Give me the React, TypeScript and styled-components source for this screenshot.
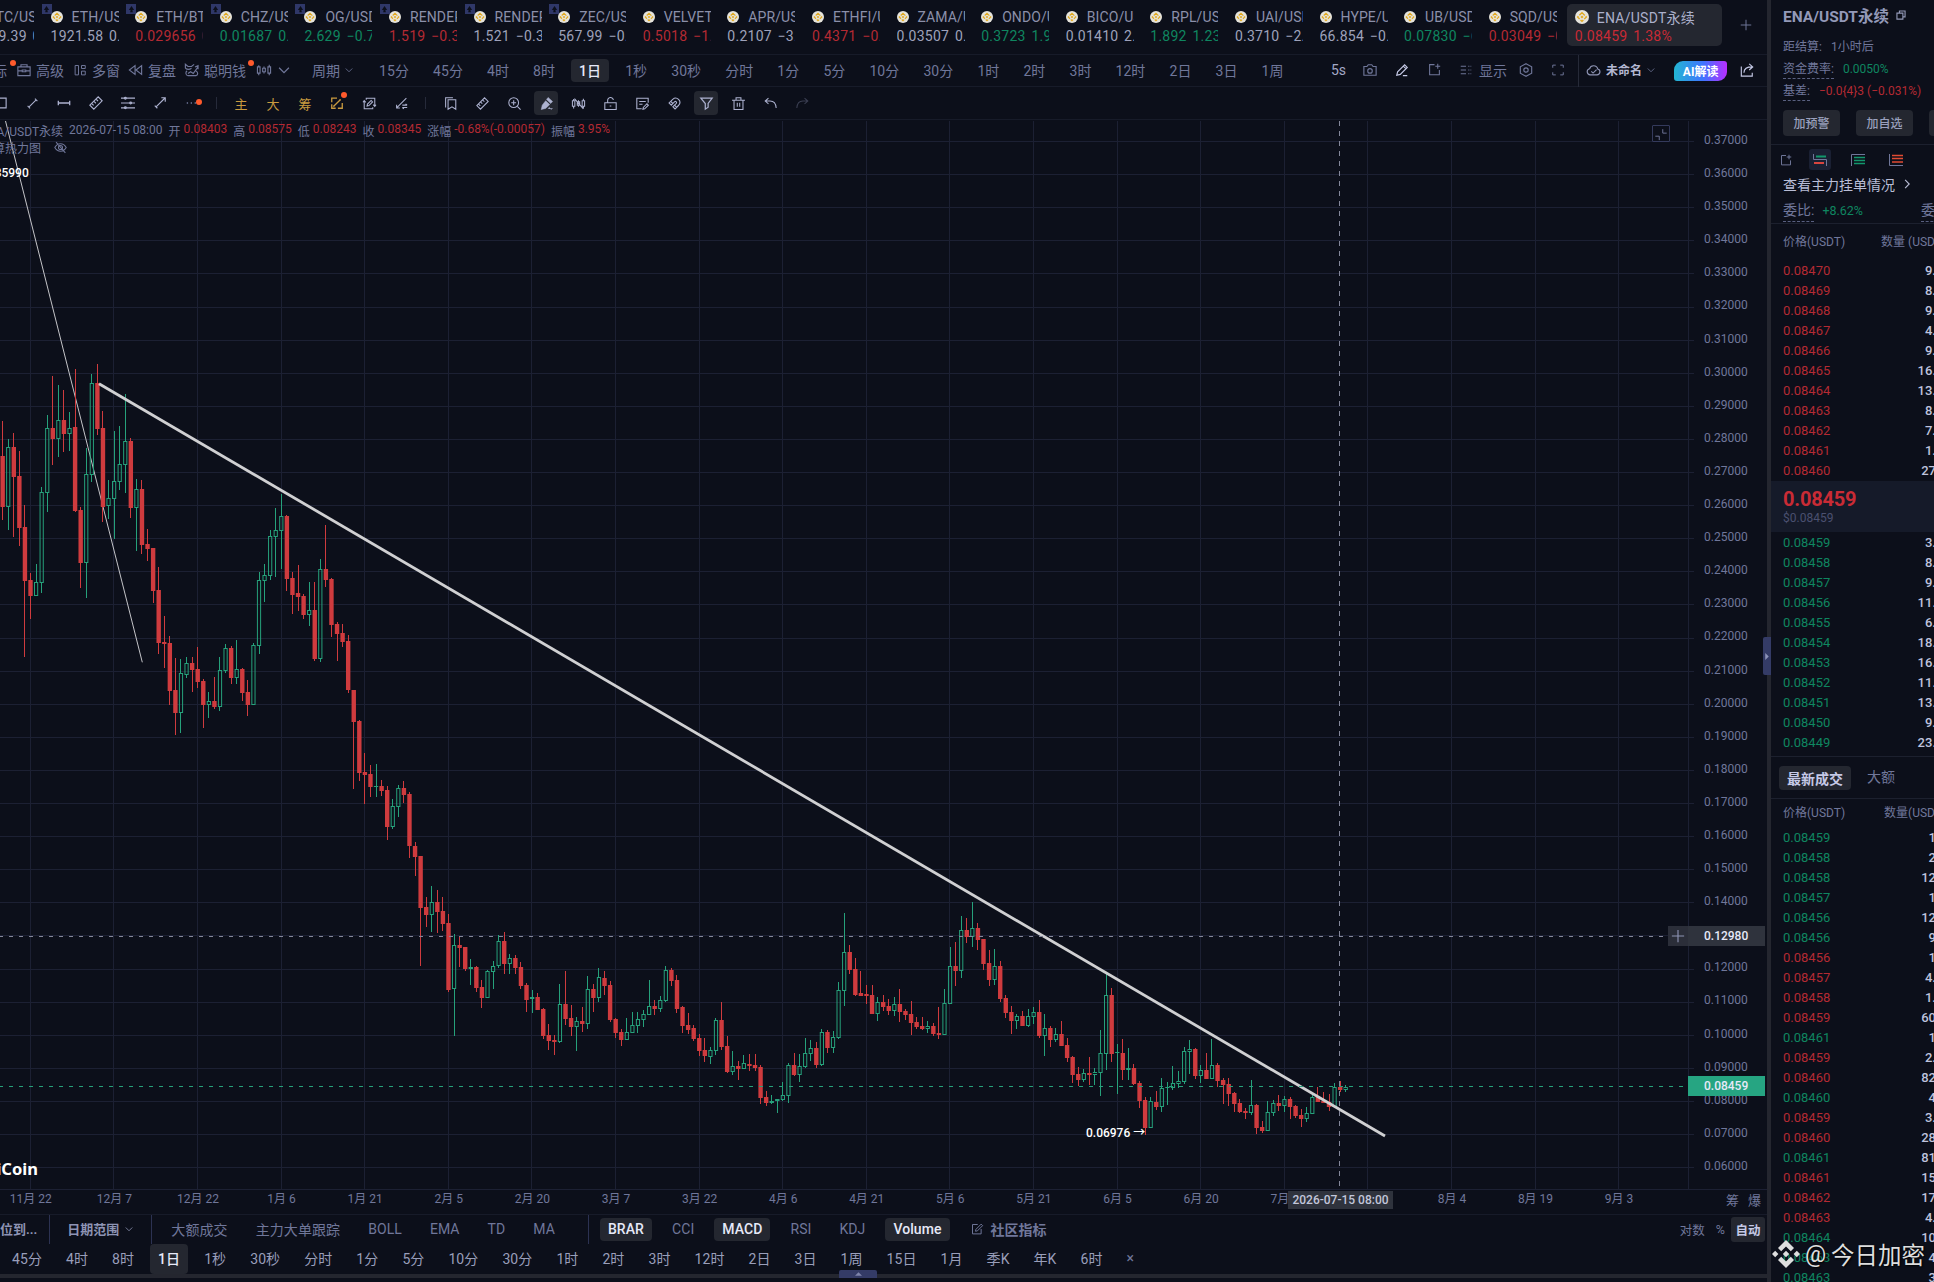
import React from "react";
import styled, { createGlobalStyle, css } from "styled-components";

const c = {
  bg: "#0c0f1a",
  grid: "#1c2033",
  line: "#171b29",
  divider: "#24262f",
  chip: "#242730",
  muted: "#70779a",
  soft: "#8e94b4",
  bright: "#c5c9e6",
  white: "#e6e9f8",
  green: "#0f8660",
  red: "#b42a33",
  up: "#26a17b",
  down: "#cf3b3e",
  gold: "#c99a3f",
  dot: "#ff5a2c",
};

const Global = createGlobalStyle`
  *, *::before, *::after { box-sizing: border-box; }
  html, body { margin: 0; padding: 0; background: ${c.bg}; }
  body {
    width: 1934px; height: 1282px; overflow: hidden;
    font-family: Roboto, "Noto Sans CJK SC", sans-serif;
    font-size: 14px; color: ${c.muted};
  }
`;

/* ---------- layout ---------- */
const Screen = styled.div`
  position: relative;
  display: grid;
  grid-template-columns: 1767px 4px 1fr;
  width: 1934px;
  height: 1282px;
  overflow: hidden;
  background: ${c.bg};
`;
const Main = styled.main`
  display: flex;
  flex-direction: column;
  min-width: 0;
  overflow: hidden;
`;
const Splitter = styled.div`
  position: relative;
  background: ${c.divider};
`;
const SplitHandle = styled.div`
  position: absolute;
  right: 0;
  top: 637px;
  width: 8px;
  height: 38px;
  display: flex;
  align-items: center;
  justify-content: center;
  background: #343b66;
  border-radius: 2px 0 0 2px;
`;

/* ---------- icons ---------- */
const Glyph = styled.svg<{ $w: number; $h: number; $color?: string }>`
  display: block;
  flex: none;
  width: ${(p) => p.$w}px;
  height: ${(p) => p.$h}px;
  color: ${(p) => p.$color ?? "currentColor"};
  fill: none;
  stroke: currentColor;
  stroke-width: 1.3;
  overflow: visible;
`;

const shapes: Record<string, React.ReactNode> = {
  briefcase: <path d="M1 4.500h14v10H1zM4.500 4.500V2h7v2.500M1 9h5M10 9h5M6 8h4v2H6z" />,
  windows: <path d="M1.500 2h4.500v12.500H1.500zM10 2h5v4h-5zM10 9.500h5v5h-5z" />,
  rewind: <path d="M7.500 3v10L1 8zM15 3v10L8.500 8z" />,
  cat: (
    <path d="M1 6V1.500L4 4h4l3-2.500M1 6c2 1.500 5 1.500 7 0M3 9c-2 1-2 5 1 5.500h9c3-1 2.500-4 0-5.500M4 12l3-2 3 2 5-7M12 4.500l3.500-1.500v4" />
  ),
  candles: (
    <path d="M.5 4.500h3v7h-3zM2 2.500v2M2 11.500v2.500M6.500 6h3v4h-3zM8 4v2M8 10v2M12.500 4.500h3v7h-3zM14 2v2.500M14 11.500V14" />
  ),
  candlesOff: (
    <path d="M.5 4.500h3v7h-3zM2 2.500v2M2 11.500v2.500M6.500 6h3v4h-3zM8 4v2M8 10v2M12.500 4.500h3v7h-3zM14 2v2.500M14 11.500V14M3 2l11 12.500" />
  ),
  chevron: <path d="M1.500 5L8 11.500 14.500 5" strokeWidth="1.600" />,
  camera: (
    <>
      <path d="M1 4h3.500L6 2h4l1.500 2H15v10H1z" />
      <circle cx="8" cy="9" r="2.600" />
    </>
  ),
  pencil: <path d="M2 14l1-4 8-8 3 3-8 8zM9.500 3.500l3 3M9 14.500h5" />,
  addBox: <path d="M8 2H2v12.500h12V8.500M12 1v6M9 4h6" />,
  list: <path d="M1 3h7M1 8h7M1 13h7M11 3h1.500M14 3h1M11 8h1.500M14 8h1M11 13h1.500M14 13h1" />,
  hexagon: (
    <>
      <path d="M8 .8l6.500 3.600v7.200L8 15.200 1.500 11.600V4.400z" />
      <circle cx="8" cy="8" r="2.500" />
    </>
  ),
  expand: <path d="M1 5V1.500h4M11 1.500h4V5M15 11v3.500h-4M5 14.500H1V11" />,
  cloud: <path d="M4.500 13.500A3.500 3.500 0 0 1 3.500 6.600 4.800 4.800 0 0 1 12.800 6.800 3.400 3.400 0 0 1 12 13.500zM5.500 9.500l2 2 4-4" />,
  share: <path d="M1.500 4v11H14v-4M4.500 11c0-4.500 3-6.500 9.500-6.500M10.500 1L14.500 4.500 10.500 8" />,
  rect: <path d="M1 2.500h14v11H1z" />,
  segment: <path d="M3.500 12.500l9-9M2 11l3 3M11 2l3 3" />,
  hseg: <path d="M1 8h14M1.500 5.500v5M14.500 5.500v5" strokeWidth="1.500" />,
  ruler: <path d="M1 10.500L10.500 1 15 5.500 5.500 15zM6 6.500l1.800 1.800M8.500 4l1.800 1.800M3.500 9l1.800 1.800" />,
  channel: (
    <>
      <path d="M0 2.500h16M0 8h16M0 13.500h16" />
      <circle cx="5" cy="2.500" r="1" />
      <circle cx="11" cy="8" r="1" />
      <circle cx="5" cy="13.500" r="1" />
    </>
  ),
  arrow: <path d="M3.500 12.500L14 2M9.500 2H14v4.500M2 11l3 3" />,
  dots: <path d="M2 8h1.500M6.500 8H8M11 8h1.500" strokeWidth="1.600" />,
  percent: <path d="M8 2.500H2V7M2 9.500v4.500h4.500M9 14h5V8M4.500 11.500l7-7M3.500 11.500h2M10.500 4.500h2" strokeWidth="1.500" />,
  swap: <path d="M4 3.500V1.500h10.500v9.500M12.500 9.500l2 2 1.500-2M1.500 5v9.500H12v-2M0 6.500L1.500 4.500 3.500 6.500M5 11l.5-2.300 4.500-4.500 1.800 1.800L7.300 10.500z" />,
  slant: <path d="M2 13.500L14 1.500M2 9.500v4h4M9 10h6M13 8.500L15 10M15 13H9M11 14.500L9 13" />,
  bookmark: <path d="M5 3.500h9.500v11.500l-4.700-3-4.800 3zM2 13V1h9" />,
  zoom: (
    <>
      <circle cx="7" cy="7" r="6" />
      <path d="M11.500 11.500L15.500 15.500M4 7h6M7 4v6" />
    </>
  ),
  brush: (
    <path
      d="M10 .5l5.500 5-2.300 2.500L8 3zM7 4.500l5 4.800L7 14l-5.500 1.500 1.200-5.500zM10 14.500c1-2 2-2 2.700-.3s1.500 1 2.800-.5"
      fill="currentColor"
      strokeWidth=".6"
    />
  ),
  unlock: <path d="M1 7h14v8.500H1zM4.500 7V4.500a3.500 3.500 0 0 1 7-.8M7 11h2" />,
  note: <path d="M15 7V1.500H1v13h6M4 5.500h8M4 9h4M8.500 15l.5-2.200L13.500 8.300l1.700 1.700-4.500 4.500z" />,
  magnet: (
    <g transform="scale(.667)" strokeWidth="2">
      <path d="M6 15l-4-4 6.750-6.770a7.790 7.790 0 0 1 11 11L13 22l-4-4 6.390-6.360a2.140 2.140 0 0 0-3-3zM5 8l4 4M12 15l4 4" />
    </g>
  ),
  funnel: <path d="M1 1.500h14L10 8v4.500L6.500 15V8z" strokeWidth="1.500" />,
  trash: <path d="M0 4h16M5 4V1h6V4M2.500 4v11.500h11V4M6.500 7v5M9.500 7v5" />,
  undo: <path d="M5.500 1.500L1.500 5l4 3.500M1.500 5h6c4 0 7 2.500 7.500 8.500" />,
  redo: <path d="M10.500 1.500L14.500 5l-4 3.500M14.500 5h-6C4.500 5 1.500 7.500 1 13.500" />,
  copy: <path d="M1.500 5h9.500v9.500H1.500zM5.500 5V1.500h9V11H11" strokeWidth="1.800" />,
  edit: <path d="M9 2H2v12.500h11.500V8M6 11l.5-2.500 7-7 2 2-7 7z" />,
  eyeOff: (
    <>
      <path d="M1 8c3.500-6 10.500-6 14 0-3.500 6-10.500 6-14 0zM2.500 1.500l11.500 13" />
      <circle cx="8" cy="8" r="2.500" />
    </>
  ),
  plus: <path d="M8 1v14M1 8h14" />,
  right: <path d="M5 1.500L11.500 8 5 14.500" strokeWidth="1.800" />,
};

function Icon({ name, w = 14, h = w, color }: { name: string; w?: number; h?: number; color?: string }) {
  return (
    <Glyph viewBox="0 0 16 16" $w={w} $h={h} $color={color}>
      {shapes[name]}
    </Glyph>
  );
}

/* ---------- symbol tabs ---------- */
const TabStrip = styled.nav`
  flex: none;
  display: flex;
  height: 55px;
  padding-top: 4px;
  border-bottom: 1px solid ${c.line};
`;
const Tab = styled.div<{ $first?: boolean }>`
  position: relative;
  flex: none;
  width: 84.600px;
  padding-top: 3px;
  margin-left: ${(p) => (p.$first ? "-34px" : "0")};
`;
const TabClip = styled.div`
  width: 68px;
  overflow: hidden;
  white-space: nowrap;
`;
const TabName = styled.div<{ $gap?: number }>`
  display: flex;
  align-items: center;
  gap: ${(p) => p.$gap ?? 9}px;
  height: 20px;
  font-size: 14px;
  color: #8b90aa;
  letter-spacing: 0.1px;
`;
const tones = { g: c.green, r: c.red, w: "#9ea2ba" };
const TabQuote = styled.div<{ $tone: "g" | "r" | "w" }>`
  height: 19px;
  line-height: 19px;
  font-size: 14px;
  letter-spacing: 0.25px;
  word-spacing: 2px;
  white-space: pre;
  color: ${(p) => tones[p.$tone]};
`;
const TabBadge = styled.div`
  position: absolute;
  left: -9px;
  top: 0;
  width: 10px;
  height: 10px;
  display: grid;
  place-items: center;
  background: #2f3768;
`;
const ActiveTab = styled.div`
  flex: none;
  width: 155px;
  height: 42px;
  margin-left: -6.500px;
  padding: 3px 8px 0;
  border-radius: 5px;
  background: ${c.chip};
  ${TabName} { color: #abb0cb; letter-spacing: 0.25px; }
  ${TabQuote} { color: #c92a35; }
`;
const AddTab = styled.div`
  display: flex;
  align-items: center;
  margin-left: 18px;
  height: 42px;
`;

function Coin({ size = 12 }: { size?: number }) {
  return (
    <Glyph viewBox="0 0 16 16" $w={size} $h={size} style={{ stroke: "none" }}>
      <circle cx="8" cy="8" r="8" fill="#e6e4dc" />
      <path d="M8 3l5 5-5 5-5-5z" fill="none" stroke="#e2a91f" strokeWidth="1.600" strokeDasharray="4.500 1.500" />
      <path d="M8 6.200L9.800 8 8 9.800 6.200 8z" fill="#e2a91f" />
    </Glyph>
  );
}

type TabRow = [string, string, "g" | "r" | "w", boolean?];
const tabs: TabRow[] = [
  ["BTC/USDT", "64779.39 0.15%", "w"],
  ["ETH/USDT", "1921.58 0.12%", "w", true],
  ["ETH/BTC", "0.029656 0.2%", "r", true],
  ["CHZ/USDT", "0.01687 0.4%", "g", true],
  ["OG/USDT", "2.629 -0.7%", "g", true],
  ["RENDER/USDT", "1.519 -0.3%", "r", true],
  ["RENDER/USDT", "1.521 -0.3%", "w", true],
  ["ZEC/USDT", "567.99 -0.8%", "w", true],
  ["VELVET/USDT", "0.5018 -1.2%", "r"],
  ["APR/USDT", "0.2107 -3.1%", "w"],
  ["ETHFI/USDT", "0.4371 -0.9%", "r"],
  ["ZAMA/USDT", "0.03507 0.4%", "w"],
  ["ONDO/USDT", "0.3723 1.95%", "g"],
  ["BICO/USDT", "0.01410 2.1%", "w"],
  ["RPL/USDT", "1.892 1.23%", "g"],
  ["UAI/USDT", "0.3710 -2.4%", "w"],
  ["HYPE/USDT", "66.854 -0.6%", "w"],
  ["UB/USDT", "0.07830 -6.1%", "g"],
  ["SQD/USDT", "0.03049 -0.8%", "r"],
];

function SymbolTabs() {
  return (
    <TabStrip>
      {tabs.map(([name, quote, tone, badge], i) => (
        <Tab key={i} $first={i === 0}>
          {badge && (
            <TabBadge>
              <Glyph viewBox="0 0 8 8" $w={7} $h={7}>
                <path d="M4 0l3 4.500H5L5.500 7h-3L3 4.500H1z" fill="#0c0f1a" stroke="none" />
              </Glyph>
            </TabBadge>
          )}
          <TabClip>
            <TabName>
              <Coin />
              {name}
            </TabName>
            <TabQuote $tone={tone}>{quote.replace("-", "−")}</TabQuote>
          </TabClip>
        </Tab>
      ))}
      <ActiveTab>
        <TabName $gap={8}>
          <Coin size={14} />
          ENA/USDT永续
        </TabName>
        <TabQuote $tone="r">0.08459 1.38%</TabQuote>
      </ActiveTab>
      <AddTab>
        <Icon name="plus" w={12} />
      </AddTab>
    </TabStrip>
  );
}

/* ---------- toolbars ---------- */
const Bar = styled.div<{ $h: number }>`
  flex: none;
  display: flex;
  align-items: center;
  height: ${(p) => p.$h}px;
  border-bottom: 1px solid ${c.line};
  white-space: nowrap;
`;
const ToolItem = styled.div<{ $before?: number; $gap?: number; $color?: string; $size?: number; $bold?: boolean }>`
  position: relative;
  flex: none;
  display: flex;
  align-items: center;
  gap: ${(p) => p.$gap ?? 5}px;
  margin-left: ${(p) => p.$before ?? 0}px;
  padding-bottom: 2px;
  color: ${(p) => p.$color ?? c.muted};
  font-size: ${(p) => p.$size ?? 14}px;
  font-weight: ${(p) => (p.$bold ? 700 : 400)};
`;
const RedDot = styled.i<{ $right: number; $top: number }>`
  position: absolute;
  right: ${(p) => p.$right}px;
  top: ${(p) => p.$top}px;
  width: 6px;
  height: 6px;
  border-radius: 50%;
  background: ${c.dot};
`;
const PeriodList = styled.div<{ $before: number }>`
  display: flex;
  gap: 8px;
  margin-left: ${(p) => p.$before}px;
`;
const Period = styled.span<{ $on?: boolean; $tall?: boolean; $color?: string }>`
  display: flex;
  align-items: center;
  height: ${(p) => (p.$tall ? 30 : 23)}px;
  padding: 0 8px ${(p) => (p.$tall ? 3 : 2)}px;
  border-radius: 4px;
  letter-spacing: 0.08px;
  color: ${(p) => p.$color ?? c.muted};
  ${(p) => p.$on && css`
    background: ${c.chip};
    color: ${c.white};
    font-weight: 500;
  `}
`;
const RightTools = styled.div`
  display: flex;
  align-items: center;
  width: 436px;
  height: 100%;
  margin-left: auto;
`;
const VRule = styled.i<{ $h: string; $before: number; $color?: string }>`
  flex: none;
  width: 1px;
  height: ${(p) => p.$h};
  margin-left: ${(p) => p.$before}px;
  background: ${(p) => p.$color ?? "#262a38"};
`;
const AiButton = styled.div`
  display: grid;
  place-items: center;
  width: 53px;
  height: 20px;
  margin-left: 19px;
  border-radius: 9px 3px 9px 3px;
  background: linear-gradient(90deg, #23b6d3, #3f74ff 55%, #b82eff);
  color: #fff;
  font-size: 12px;
  font-weight: 700;
`;

const periods = ["15分", "45分", "4时", "8时", "1日", "1秒", "30秒", "分时", "1分", "5分", "10分", "30分", "1时", "2时", "3时", "12时"];

function MainToolbar() {
  return (
    <Bar $h={32}>
      <ToolItem $before={-7}>
        标
        <RedDot $right={-9} $top={0} />
      </ToolItem>
      <ToolItem $before={10}><Icon name="briefcase" />高级</ToolItem>
      <ToolItem $before={10} $gap={6}><Icon name="windows" w={12} h={14} />多窗</ToolItem>
      <ToolItem $before={8}><Icon name="rewind" w={15} h={14} />复盘</ToolItem>
      <ToolItem $before={8}>
        <Icon name="cat" w={15} h={14} />聪明钱
        <RedDot $right={-8} $top={0} />
      </ToolItem>
      <ToolItem $before={11}><Icon name="candles" /></ToolItem>
      <ToolItem $before={7}><Icon name="chevron" w={12} h={12} /></ToolItem>
      <ToolItem $before={22}>周期<Icon name="chevron" w={8} /></ToolItem>
      <PeriodList $before={18}>
        {[...periods, "2日", "3日", "1周"].map((p) => (
          <Period key={p} $on={p === "1日"}>{p}</Period>
        ))}
      </PeriodList>
      <RightTools>
        <ToolItem $color="#a3a8c6">5s</ToolItem>
        <ToolItem $before={16}><Icon name="camera" w={16} h={14} /></ToolItem>
        <ToolItem $before={17} $color={c.bright}><Icon name="pencil" /></ToolItem>
        <ToolItem $before={19}><Icon name="addBox" w={13} /></ToolItem>
        <ToolItem $before={19} $gap={7}><Icon name="list" w={12} />显示</ToolItem>
        <ToolItem $before={12}><Icon name="hexagon" w={14} /></ToolItem>
        <ToolItem $before={19}><Icon name="expand" w={12} /></ToolItem>
        <VRule $h="32px" $before={14} />
        <ToolItem $before={7} $color={c.soft}><Icon name="cloud" w={15} h={14} /></ToolItem>
        <ToolItem $before={5} $size={12} $color="#b4b8d2" $bold>未命名<Icon name="chevron" w={8} color={c.muted} /></ToolItem>
        <AiButton>AI解读</AiButton>
        <ToolItem $before={13} $color={c.bright}><Icon name="share" /></ToolItem>
      </RightTools>
    </Bar>
  );
}

const DrawBar = styled(Bar)`
  gap: 8px;
  color: #adb2d0;
`;
const DrawCell = styled.div<{ $first?: boolean; $on?: boolean; $gold?: boolean; $dim?: boolean }>`
  position: relative;
  flex: none;
  display: grid;
  place-items: center;
  width: 24px;
  height: 24px;
  margin-left: ${(p) => (p.$first ? "-12px" : "0")};
  border-radius: 4px;
  font-size: 13px;
  background: ${(p) => (p.$on ? c.chip : "transparent")};
  color: ${(p) => (p.$gold ? c.gold : p.$dim ? "#3b3f52" : "inherit")};
`;
const DrawSep = styled.i`
  flex: none;
  width: 1px;
  height: 12px;
  margin: 0 4px;
  background: #262a3a;
`;

function DrawToolbar() {
  return (
    <DrawBar $h={33}>
      <DrawCell $first><Icon name="rect" w={14} /></DrawCell>
      {["segment", "hseg", "ruler", "channel", "arrow"].map((n) => (
        <DrawCell key={n}><Icon name={n} w={n === "segment" ? 13 : 14} /></DrawCell>
      ))}
      <DrawCell>
        <Icon name="dots" w={14} color={c.muted} />
        <RedDot $right={2} $top={8} />
      </DrawCell>
      <DrawSep />
      <DrawCell $gold>主</DrawCell>
      <DrawCell $gold>大</DrawCell>
      <DrawCell $gold>筹</DrawCell>
      <DrawCell $gold>
        <Icon name="percent" w={14} />
        <RedDot $right={2} $top={1} />
      </DrawCell>
      <DrawCell><Icon name="swap" w={13} /></DrawCell>
      <DrawCell><Icon name="slant" w={13} /></DrawCell>
      <DrawSep />
      {["bookmark", "ruler", "zoom", "brush", "candlesOff", "unlock", "note", "magnet", "funnel", "trash", "undo", "redo"].map((n) => (
        <DrawCell key={n} $on={n === "brush" || n === "funnel"} $dim={n === "redo"}>
          <Icon name={n} w={13} />
        </DrawCell>
      ))}
    </DrawBar>
  );
}

/* ---------- chart ---------- */
const ChartArea = styled.section`
  position: relative;
  flex: none;
  display: flex;
  height: 1069px;
`;
const Plot = styled.svg`
  display: block;
  flex: none;
  width: 1694px;
  height: 1069px;
`;
const PriceAxis = styled.div`
  flex: none;
  width: 73px;
  padding: 4px 0 0 10px;
`;
const PriceLabel = styled.div`
  height: 33.1px;
  line-height: 33.1px;
  font-size: 12px;
  color: ${c.muted};
`;
const PriceTag = styled.div<{ $top: number; $bg: string }>`
  position: absolute;
  left: 1688px;
  top: ${(p) => p.$top}px;
  width: 77px;
  height: 20px;
  padding-left: 16px;
  line-height: 20px;
  font-size: 12px;
  font-weight: 500;
  color: ${c.white};
  background: ${(p) => p.$bg};
`;
const AddAlert = styled.div`
  position: absolute;
  left: 1668px;
  top: 806px;
  width: 20px;
  height: 20px;
  display: grid;
  place-items: center;
  background: #2b2e39;
  color: ${c.soft};
`;
const Legend = styled.div`
  position: absolute;
  left: 0;
  top: 1px;
  font-size: 12px;
  white-space: nowrap;
  color: ${c.muted};
`;
const LegendRow = styled.div<{ $shift: number; $h: number }>`
  display: flex;
  align-items: center;
  height: ${(p) => p.$h}px;
  margin-left: ${(p) => p.$shift}px;
`;
const Field = styled.span`
  display: flex;
  gap: 3px;
  margin-left: 6px;
`;
const FieldValue = styled.span`
  color: ${c.red};
`;
const EyeSlot = styled.span`
  margin-left: 13px;
`;
const Note = styled.div<{ $left: number; $top: number; $size?: number; $bold?: boolean }>`
  position: absolute;
  left: ${(p) => p.$left}px;
  top: ${(p) => p.$top}px;
  font-size: ${(p) => p.$size ?? 12}px;
  font-weight: ${(p) => (p.$bold ? 700 : 500)};
  line-height: 16px;
  color: #fff;
  white-space: nowrap;
`;
const Logo = styled(Note)`
  font-family: "Noto Sans", "Open Sans", sans-serif;
`;
const FoldButton = styled.div`
  position: absolute;
  left: 1652px;
  top: 5px;
  width: 18px;
  height: 17px;
  display: grid;
  place-items: center;
  border: 1px solid #343a5c;
  border-radius: 1px;
`;

/* Candles: direction, high, body top, body bottom, low; in thirds of a pixel below `base`. */
const sessions = [
  {
    base: 350,
    rows: `r 213 318 470 510;g 268 291 470 540;r 249 291 380 560;r 304 378 533 588;r 465 531 692 920;r 668 690 738 807;g 642 696 738 738;g 412 427 698 728;g 196 234 429 486;r 79 234 267 345;g 105 210 267 320;r 120 210 252 305;g 187 234 252 302;r 56 231 483 486;r 472 480 639 713;g 294 373 638 745;g 72 99 375 395;r 42 99 237 254;r 184 234 470 515;g 391 445 467 506;g 244 393 446 567;g 229 343 396 420;g 133 273 345 429;r 264 273 473 504;g 388 417 473 603;r 391 417 585 612;r 538 582 597 633;r 594 594 723 758;r 652 720 879 911;r 798 876 882 953;r 858 879 1023 1064;r 925 1020 1089 1154;g 927 969 1088 1148;g 921 939 975 984;r 921 939 960 1025;r 891 957 996 1014;r 988 993 1065 1133;g 1027 1053 1065 1103;r 982 1053 1071 1076;g 921 960 1071 1082;g 883 894 962 970;r 888 894 984 1001;g 871 957 984 1003;r 955 957 1029 1052;r 991 1026 1065 1097;g 880 885 1065 1065;g 667 690 888 911;g 642 675 693 755;g 541 559 678 689;g 474 540 560 682;g 432 498 543 656;r 496 498 687 722;r 667 684 735 792;r 646 729 741 782;r 732 738 795 806;g 697 780 795 827;r 697 780 927 932;g 626 657 927 935;r 525 657 690 711;r 685 687 825 861;r 816 822 852 932;r 822 849 876 891;r 855 873 1020 1030;r 1020 1020 1116 1316;r 1110 1113 1269 1293;r 1209 1266 1275 1362;r 1245 1272 1311 1341;g 1243 1307 1311 1341;r 1290 1308 1323 1337`,
  },
  {
    base: 750,
    rows: `r 108 120 231 269;g 148 168 231 236;g 106 114 171 202;r 94 114 135 158;r 127 132 288 323;r 276 288 321 377;r 318 318 474 647;r 441 471 495 531;g 409 456 495 545;r 420 456 486 549;r 441 483 522 543;r 492 519 720 727;g 552 585 717 857;r 558 585 594 650;r 591 591 657 663;g 628 651 657 704;r 649 651 714 725;r 690 711 744 773;g 659 663 744 744;g 633 648 666 716;g 556 573 648 653;r 546 573 642 671;g 612 624 642 671;r 615 624 654 673;r 636 651 708 716;r 699 705 750 785;g 720 741 747 789;r 730 741 780 780;r 774 777 858 866;r 823 855 873 900;r 856 870 876 914;g 702 762 876 879;r 663 762 807 825;r 765 804 831 858;g 801 813 831 903;r 772 813 822 847;g 678 717 822 837;r 702 717 744 785;g 654 681 744 757;r 663 684 708 735;r 693 705 810 815;r 805 807 850 865;r 837 846 870 888;g 804 846 870 870;g 786 825 849 849;g 786 807 828 848;g 780 792 810 830;g 690 768 795 795;r 750 768 777 794;g 738 750 777 785;g 649 660 753 757;r 654 660 693 708;r 675 690 777 789;r 767 771 828 849;r 789 825 840 852;r 825 834 867 873;r 852 864 903 917;r 865 900 918 936;g 892 900 921 943;g 804 810 903 915;r 756 810 891 901;r 858 888 966 968;g 904 948 966 975;r 934 948 957 990;g 915 939 957 957;r 912 942 948 962;r 912 945 954 963;r 946 951 1044 1063;r 1023 1041 1059 1068;g 1036 1053 1059 1061;g 1047 1047 1053 1089;g 996 1035 1050 1054;g 939 945 1038 1060;r 910 945 975 977;g 912 948 975 995;g 865 909 951 953;g 870 894 912 932;r 876 894 945 953;g 837 846 945 948;r 841 846 894 909;g 843 861 894 909;g 697 720 864 867;g 489 606 723 768;r 586 606 660 671;r 625 657 735 738;r 663 729 738 738;r 705 732 738 762;r 706 735 792 792;g 741 756 792 812`,
  },
  {
    base: 860,
    rows: `r 405 426 441 454;r 416 438 453 466;g 411 432 453 468;r 387 432 456 486;r 447 453 465 479;r 423 462 489 526;r 471 486 501 507;r 471 498 507 511;g 483 498 507 518;r 489 498 522 527;r 441 519 525 537;g 388 429 525 525;g 262 318 432 432;r 247 318 333 378;g 169 210 333 354;r 174 210 231 249;g 127 204 231 261;r 190 204 240 269;r 237 237 312 330;r 269 309 360 378;g 268 318 360 375;r 303 318 417 427;r 405 414 459 473;r 437 456 483 523;g 463 468 483 508;r 453 468 498 498;g 448 468 498 502;g 442 456 471 493;r 421 456 528 535;g 461 504 528 588;r 499 504 540 561;g 505 522 540 547;r 484 522 558 558;r 534 555 594 605;r 588 591 645 668;r 621 642 660 678;g 627 639 660 667;r 592 639 645 674;g 624 636 645 676;g 511 579 639 708;g 340 405 582 630;r 385 405 582 605;g 552 576 580 702;r 538 579 630 660;g 564 624 630 661;r 612 624 672 675;r 663 669 723 744;r 711 720 804 824;g 712 723 804 804;r 694 726 741 750;g 654 684 741 756;g 667 681 685 735;g 618 669 684 690;g 634 663 672 684;g 562 573 666 673;g 541 567 576 641;r 564 567 648 658;g 615 630 648 670;r 580 630 657 657;g 538 615 657 657;r 610 615 663 680;r 655 660 675 731;r 655 672 702 738;r 697 699 732 756;r 718 729 756 758;r 745 753 759 776;g 661 735 759 765;r 733 735 804 821;r 783 801 813 818;g 724 756 813 813;g 721 729 759 768;r 705 729 738 754;g 708 717 738 757;r 710 717 741 777;r 736 738 768 774;r 748 765 777 800;g 742 759 777 785;g 703 711 762 762;r 682 708 726 726;r 697 723 729 730;r 703 726 741 753;g 669 681 741 742;r 664 681 690 697;g 675 681 690 696`,
  },
];

const candles = sessions.flatMap(({ base, rows }) =>
  rows.split(";").map((row) => {
    const [dir, ...v] = row.split(" ");
    const [high, top, bottom, low] = v.map((n) => Math.round(base + Number(n) / 3));
    return { up: dir === "g", high, top, bottom, low };
  }),
);

const STEP = 5.573;
const FIRST = 2.65;

function Candle({ i, up, high, top, bottom, low }: { i: number; up: boolean; high: number; top: number; bottom: number; low: number }) {
  const x = FIRST + i * STEP;
  const wick = Math.floor(x);
  const h = Math.max(1, bottom - top);
  const color = up ? c.up : c.down;
  return (
    <g fill={color}>
      {top > high && <rect x={wick} y={high} width={1} height={top - high} />}
      {low > bottom && <rect x={wick} y={bottom} width={1} height={low - bottom} />}
      {up && h > 2 ? (
        <rect x={x - 1.6} y={top + 0.5} width={3.2} height={h - 1} fill="none" stroke={color} />
      ) : (
        <rect x={x - 2.2} y={top} width={4.4} height={h} />
      )}
    </g>
  );
}

function ChartPlot() {
  return (
    <Plot viewBox="0 120 1694 1069">
      <g fill={c.grid}>
        {Array.from({ length: 32 }, (_, k) => (
          <rect key={k} x={0} y={Math.round(141 + 33.1 * k)} width={1694} height={1} />
        ))}
        {Array.from({ length: 20 }, (_, k) => (
          <rect key={k} x={Math.round(29.85 + 83.6 * k)} y={121} width={1} height={1068} />
        ))}
        <rect x={1688} y={121} width={1} height={1068} />
      </g>
      <path d="M5.500 121L142.300 662.300" stroke="#c4c4c8" strokeWidth="1" />
      {candles.map((k, i) => (
        <Candle key={i} i={i} {...k} />
      ))}
      <path d="M99 383.700L1385 1136" stroke="#d0d0d2" strokeWidth="2.800" />
      <path d="M0 936.500H1668" stroke="#84879a" strokeDasharray="4 6" strokeDashoffset="1" />
      <path d="M0 1086.500H1688" stroke={c.up} strokeDasharray="4 6" strokeDashoffset="1" />
      <path d="M1688 1086.500h6" stroke="#fff" />
      <path d="M1339.500 121V1189" stroke="#84879a" strokeDasharray="5 5" />
    </Plot>
  );
}

const priceLabels = Array.from({ length: 32 }, (_, k) => (0.37 - k * 0.01).toFixed(5));

function Chart() {
  return (
    <ChartArea>
      <ChartPlot />
      <PriceAxis>
        {priceLabels.map((p) => (
          <PriceLabel key={p}>{p === "0.13000" ? "" : p}</PriceLabel>
        ))}
      </PriceAxis>
      <AddAlert><Icon name="plus" w={14} /></AddAlert>
      <PriceTag $top={806} $bg="#2f333d">0.12980</PriceTag>
      <PriceTag $top={956} $bg="#26a582">0.08459</PriceTag>
      <Legend>
        <LegendRow $shift={-19} $h={18}>
          ENA/USDT永续
          <Field>2026-07-15 08:00</Field>
          {[["开", "0.08403"], ["高", "0.08575"], ["低", "0.08243"], ["收", "0.08345"], ["涨幅", "-0.68%(-0.00057)"], ["振幅", "3.95%"]].map(([k, v]) => (
            <Field key={k}>{k}<FieldValue>{v}</FieldValue></Field>
          ))}
        </LegendRow>
        <LegendRow $shift={-19} $h={16}>
          清算热力图
          <EyeSlot><Icon name="eyeOff" w={13} /></EyeSlot>
        </LegendRow>
      </Legend>
      <Note $left={-15.5} $top={44.5}>0.35990</Note>
      <Note $left={1086} $top={1005}>0.06976 →</Note>
      <Logo $left={-15} $top={1041} $size={16.5} $bold>AiCoin</Logo>
      <FoldButton>
        <Glyph viewBox="0 0 16 16" $w={14} $h={14}>
          <path d="M10 2.500v4.500h4.500M1.500 10.500H6V15" strokeWidth="1.100" />
        </Glyph>
      </FoldButton>
    </ChartArea>
  );
}

const TimeAxis = styled.div`
  position: relative;
  flex: none;
  display: flex;
  height: 25px;
  border-top: 1px solid ${c.grid};
`;
const TimeLabel = styled.div<{ $first?: boolean }>`
  flex: none;
  width: 83.6px;
  margin-left: ${(p) => (p.$first ? "-11px" : "0")};
  text-align: center;
  font-size: 12px;
  line-height: 19px;
`;
const TimeTag = styled.div`
  position: absolute;
  left: 1288px;
  top: 1px;
  width: 105px;
  height: 18px;
  line-height: 18px;
  text-align: center;
  font-size: 12px;
  font-weight: 500;
  background: #2f333d;
  color: #c2c6da;
`;
const AxisModes = styled.div`
  position: absolute;
  right: 6px;
  top: 0;
  display: flex;
  gap: 9px;
  line-height: 22px;
  font-size: 13px;
`;
const dates = ["11月 22", "12月 7", "12月 22", "1月 6", "1月 21", "2月 5", "2月 20", "3月 7", "3月 22", "4月 6", "4月 21", "5月 6", "5月 21", "6月 5", "6月 20", "7月 5", "", "8月 4", "8月 19", "9月 3"];

/* ---------- bottom bars ---------- */
const BottomBar = styled.div<{ $rule?: boolean }>`
  flex: none;
  display: flex;
  align-items: center;
  height: 30px;
  white-space: nowrap;
  border-top: ${(p) => (p.$rule ? `1px solid ${c.line}` : "none")};
`;
const Indicators = styled.div<{ $before: number }>`
  display: flex;
  gap: 12px;
  margin-left: ${(p) => p.$before}px;
`;
const ScaleModes = styled.div`
  display: flex;
  align-items: center;
  gap: 11px;
  margin-left: auto;
  margin-right: 2px;
  font-size: 12.500px;
`;
const AutoScale = styled.span`
  display: grid;
  place-items: center;
  width: 34px;
  height: 25px;
  margin-left: -5px;
  border-radius: 3px;
  background: ${c.chip};
  color: ${c.bright};
  font-weight: 700;
`;
const FootRule = styled.div`
  position: relative;
  flex: none;
  height: 4px;
  background: ${c.divider};
`;
const FootHandle = styled.div`
  position: absolute;
  left: 839px;
  bottom: 0;
  width: 38px;
  height: 8px;
  display: grid;
  place-items: center;
  border-radius: 2px 2px 0 0;
  background: #343b66;
`;

function BottomBars() {
  return (
    <>
      <BottomBar $rule>
        <ToolItem $before={-13} $size={13} $color={c.soft} $bold>定位到...</ToolItem>
        <VRule $h="29px" $before={12} $color="#2c3252" />
        <ToolItem $before={17} $size={13} $color={c.soft} $gap={6} $bold>日期范围<Icon name="chevron" w={8} /></ToolItem>
        <VRule $h="29px" $before={18} $color="#2c3252" />
        <Indicators $before={11}>
          {["大额成交", "主力大单跟踪", "BOLL", "EMA", "TD", "MA"].map((n) => (
            <Period key={n}>{n}</Period>
          ))}
        </Indicators>
        <VRule $h="29px" $before={25} $color="#2c3252" />
        <Indicators $before={11}>
          {["BRAR", "CCI", "MACD", "RSI", "KDJ", "Volume"].map((n) => (
            <Period key={n} $on={["BRAR", "MACD", "Volume"].includes(n)}>{n}</Period>
          ))}
        </Indicators>
        <ToolItem $before={21} $gap={8} $bold><Icon name="edit" w={12} />社区指标</ToolItem>
        <ScaleModes>
          <span>对数</span>
          <span>%</span>
          <AutoScale>自动</AutoScale>
        </ScaleModes>
      </BottomBar>
      <BottomBar>
        <PeriodList $before={4}>
          {["45分", "4时", "8时", "1日", "1秒", "30秒", "分时", "1分", "5分", "10分", "30分", "1时", "2时", "3时", "12时", "2日", "3日", "1周", "15日", "1月", "季K", "年K", "6时", "×"].map((p) => (
            <Period key={p} $tall $on={p === "1日"} $color={p === "×" ? c.muted : "#999eba"}>{p}</Period>
          ))}
        </PeriodList>
      </BottomBar>
      <FootRule>
        <FootHandle>
          <Glyph viewBox="0 0 8 4" $w={7} $h={4}>
            <path d="M0 4L4 0l4 4z" fill="#7e84ab" stroke="none" />
          </Glyph>
        </FootHandle>
      </FootRule>
    </>
  );
}

/* ---------- order book ---------- */
const Side = styled.aside`
  display: flex;
  flex-direction: column;
  min-width: 0;
  overflow: hidden;
  white-space: nowrap;
`;
const Summary = styled.header`
  flex: none;
  height: 145px;
  padding: 4px 0 0 12px;
  border-bottom: 1px solid #1c202e;
`;
const Title = styled.div`
  display: flex;
  align-items: center;
  gap: 7px;
  height: 22px;
  margin-bottom: 10px;
  font-size: 15.500px;
  font-weight: 700;
  color: #9399b8;
`;
const Stat = styled.div`
  display: flex;
  gap: 9px;
  height: 22px;
  line-height: 22px;
  font-size: 12px;
`;
const StatName = styled.span<{ $dashed?: boolean }>`
  height: 21px;
  border-bottom: ${(p) => (p.$dashed ? "1px dashed #596080" : "none")};
`;
const Tone = styled.span<{ $up?: boolean }>`
  color: ${(p) => (p.$up ? c.green : c.red)};
`;
const Actions = styled.div`
  display: flex;
  gap: 16px;
  margin-top: 8px;
`;
const ActionButton = styled.div`
  flex: none;
  display: grid;
  place-items: center;
  width: 57px;
  height: 26px;
  padding-bottom: 1px;
  border-radius: 4px;
  background: ${c.chip};
  color: #9aa0bd;
  font-size: 12px;
  font-weight: 500;
`;
const BookHead = styled.div`
  flex: none;
  height: 79px;
  padding: 4px 0 0 8px;
  border-bottom: 1px solid #1c202e;
`;
const BookModes = styled.div`
  display: flex;
  gap: 16px;
  height: 23px;
`;
const ModeCell = styled.div<{ $on?: boolean; $narrow?: boolean }>`
  flex: none;
  display: grid;
  place-items: center;
  width: ${(p) => (p.$narrow ? 14 : 22)}px;
  height: 21px;
  border-radius: 3px;
  background: ${(p) => (p.$on ? "#1a2033" : "transparent")};
`;
const BookLink = styled.div`
  display: flex;
  align-items: center;
  gap: 7px;
  height: 26px;
  padding: 0 0 2px 4px;
  font-size: 14px;
  color: #b9bdd6;
`;
const Ratio = styled.div`
  display: flex;
  align-items: center;
  gap: 8px;
  height: 24px;
  padding-left: 4px;
  font-size: 12.500px;
`;
const RatioName = styled.span<{ $push?: boolean }>`
  height: 23px;
  line-height: 22px;
  font-size: 14px;
  margin-left: ${(p) => (p.$push ? "50px" : "0")};
  border-bottom: 1px dashed #596080;
`;
const HeadRow = styled.div<{ $h: number; $gap: number }>`
  flex: none;
  display: flex;
  align-items: center;
  gap: ${(p) => p.$gap}px;
  height: ${(p) => p.$h}px;
  padding: 0 0 3px 12px;
  font-size: 12px;
`;
const Rows = styled.div`
  flex: none;
`;
const Row = styled.div<{ $h: number }>`
  display: flex;
  align-items: center;
  justify-content: space-between;
  width: 165px;
  height: ${(p) => p.$h}px;
  padding-left: 12px;
  font-size: 13px;
`;
const Qty = styled.span`
  color: #bfc3dd;
  font-weight: 500;
`;
const LastPrice = styled.div`
  flex: none;
  height: 51px;
  margin-top: 1px;
  padding: 6px 0 0 12px;
  background: #151a29;
`;
const LastValue = styled.div`
  height: 24px;
  line-height: 24px;
  font-size: 20px;
  font-weight: 700;
  letter-spacing: -0.2px;
  color: #c92b35;
`;
const LastUsd = styled.div`
  line-height: 15px;
  font-size: 12px;
  color: #4b5070;
`;
const TradeTabs = styled.div`
  flex: none;
  display: flex;
  align-items: center;
  gap: 16px;
  height: 43px;
  margin-top: 4px;
  padding-left: 8px;
  border-top: 1px solid #1c202e;
  border-bottom: 1px solid #1c202e;
  font-size: 14px;
`;
const TradeTab = styled.span<{ $on?: boolean }>`
  display: grid;
  place-items: center;
  width: ${(p) => (p.$on ? "72px" : "auto")};
  height: 24px;
  padding-bottom: ${(p) => (p.$on ? 0 : 3)}px;
  border-radius: 4px;
  ${(p) => p.$on && css`
    background: ${c.chip};
    color: ${c.bright};
    font-weight: 700;
  `}
`;

const asks = ["9.", "8.", "9.", "4.", "9.", "16.", "13.", "8.", "7.", "1.", "27"];
const bids = ["3.", "8.", "9.", "11.", "6.", "18.", "16.", "11.", "13.", "9.", "23."];
const trades: [number, boolean, string][] = [
  [59, true, "1"], [58, true, "2"], [58, true, "12"], [57, true, "1"], [56, true, "12"], [56, true, "9"],
  [56, false, "1"], [57, false, "4."], [58, false, "1."], [59, false, "60"], [61, true, "1"], [59, false, "2."],
  [60, false, "82"], [60, true, "4"], [59, false, "3."], [60, false, "28"], [61, true, "81"], [61, false, "15"],
  [62, false, "17"], [63, false, "4."], [64, true, "10"], [63, true, "4"], [63, true, "3"],
];

function BookIcon({ kind }: { kind: "both" | "bids" | "asks" }) {
  const g = "#12976c";
  const r = "#d8453f";
  return (
    <Glyph viewBox="0 0 14 12" $w={14} $h={12}>
      {kind === "both" && (
        <>
          <path d="M.5 0v5.500h13V12" stroke={c.muted} strokeWidth="1" />
          <path d="M3 2.500h10" stroke={g} strokeWidth="2" />
          <path d="M1 9h10" stroke={r} strokeWidth="2" />
        </>
      )}
      {kind === "bids" && (
        <>
          <path d="M.5 12V.5H14" stroke={c.muted} strokeWidth="1" />
          <path d="M3 3.500h11M3 6.500h11M3 9.500h11" stroke={g} strokeWidth="1.500" />
        </>
      )}
      {kind === "asks" && (
        <>
          <path d="M.5 0v11.500H14" stroke={c.muted} strokeWidth="1" />
          <path d="M3 1.500h11M3 4.500h11M3 8h11" stroke="#e04b33" strokeWidth="1.500" />
        </>
      )}
    </Glyph>
  );
}

function OrderBook() {
  return (
    <Side>
      <Summary>
        <Title>ENA/USDT永续<Icon name="copy" w={10} /></Title>
        <Stat><StatName>距结算:</StatName><span>1小时后</span></Stat>
        <Stat><StatName $dashed>资金费率:</StatName><Tone $up>0.0050%</Tone></Stat>
        <Stat><StatName $dashed>基差:</StatName><Tone>−0.0{"{4}"}3 (−0.031%)</Tone></Stat>
        <Actions>
          <ActionButton>加预警</ActionButton>
          <ActionButton>加自选</ActionButton>
          <ActionButton />
        </Actions>
      </Summary>
      <BookHead>
        <BookModes>
          <ModeCell $narrow><Icon name="addBox" w={12} /></ModeCell>
          <ModeCell $on><BookIcon kind="both" /></ModeCell>
          <ModeCell><BookIcon kind="bids" /></ModeCell>
          <ModeCell><BookIcon kind="asks" /></ModeCell>
        </BookModes>
        <BookLink>查看主力挂单情况<Icon name="right" w={10} /></BookLink>
        <Ratio><RatioName>委比:</RatioName><Tone $up>+8.62%</Tone><RatioName $push>委差:</RatioName></Ratio>
      </BookHead>
      <HeadRow $h={36} $gap={36}><span>价格(USDT)</span><span>数量 (USDT)</span></HeadRow>
      <Rows>
        {asks.map((q, i) => (
          <Row key={i} $h={20}><Tone>{`0.084${70 - i}`}</Tone><Qty>{q}</Qty></Row>
        ))}
      </Rows>
      <LastPrice>
        <LastValue>0.08459</LastValue>
        <LastUsd>$0.08459</LastUsd>
      </LastPrice>
      <Rows>
        {bids.map((q, i) => (
          <Row key={i} $h={20}><Tone $up>{`0.084${59 - i}`}</Tone><Qty>{q}</Qty></Row>
        ))}
      </Rows>
      <TradeTabs><TradeTab $on>最新成交</TradeTab><TradeTab>大额</TradeTab></TradeTabs>
      <HeadRow $h={28} $gap={39}><span>价格(USDT)</span><span>数量(USDT)</span></HeadRow>
      <Rows>
        {trades.map(([p, up, q], i) => (
          <Row key={i} $h={20.03}><Tone $up={up}>{`0.084${p}`}</Tone><Qty>{q}</Qty></Row>
        ))}
      </Rows>
    </Side>
  );
}

const Watermark = styled.div`
  position: absolute;
  left: 1772px;
  top: 1239px;
  display: flex;
  align-items: center;
  gap: 5px;
  height: 30px;
  font-size: 23.500px;
  color: #dedede;
  white-space: nowrap;
  text-shadow: 1px 1px 2px #000;
`;

export default function App() {
  return (
    <Screen>
      <Global />
      <Main>
        <SymbolTabs />
        <MainToolbar />
        <DrawToolbar />
        <Chart />
        <TimeAxis>
          {dates.map((d, i) => (
            <TimeLabel key={i} $first={i === 0}>{d}</TimeLabel>
          ))}
          <TimeTag>2026-07-15 08:00</TimeTag>
          <AxisModes><span>筹</span><span>爆</span></AxisModes>
        </TimeAxis>
        <BottomBars />
      </Main>
      <Splitter>
        <SplitHandle>
          <Glyph viewBox="0 0 4 8" $w={4} $h={7}>
            <path d="M0 0l4 4-4 4z" fill="#8d93b8" stroke="none" />
          </Glyph>
        </SplitHandle>
      </Splitter>
      <OrderBook />
      <Watermark>
        <Glyph viewBox="0 0 28 28" $w={28} $h={28}>
          <path
            d="M14 0l8 8-3.200 3.200L14 6.400l-4.800 4.800L6 8zM14 28l8-8-3.200-3.200-4.800 4.800-4.800-4.800L6 20zM14 10.800l3.200 3.200-3.200 3.200-3.200-3.200zM3.200 10.800L6.400 14l-3.200 3.200L0 14zM24.800 10.800L28 14l-3.200 3.200-3.200-3.200z"
            fill="#dedede"
            stroke="none"
          />
        </Glyph>
        <span>@</span>
        <span>今日加密</span>
      </Watermark>
    </Screen>
  );
}
